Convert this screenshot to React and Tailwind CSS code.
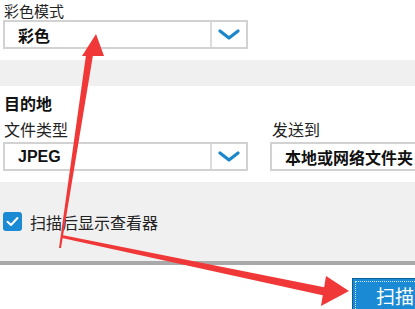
import React from "react";

const font = { fontFamily: '"Noto Sans CJK SC", "Noto Sans", sans-serif' };

function Chevron() {
  return (
    <svg width="22" height="12" viewBox="0 0 22 12">
      <path d="M2 2 L11 9 L20 2" fill="none" stroke="#1b86c9" strokeWidth="3.2" strokeLinecap="round" strokeLinejoin="round" />
    </svg>
  );
}

function Select({ value, arrow = true, className = "" }) {
  return (
    <div className={"flex h-[29px] border-2 border-[#d2d2d2] bg-white " + className}>
      <div className="flex flex-1 items-center pl-[13px] text-[16px] font-semibold text-[#111] leading-none">{value}</div>
      {arrow && (
        <div className="flex w-[36px] items-center justify-center border-l-2 border-[#dcdcdc]">
          <Chevron />
        </div>
      )}
    </div>
  );
}

export default function App() {
  return (
    <div className="relative h-[309px] w-[415px] overflow-hidden bg-white" style={font}>
      <div className="flex h-[60px] flex-col px-[3px] pt-[2px]">
        <div className="h-[18px] pl-[1px] text-[15px] leading-[17px] text-[#222]">彩色模式</div>
        <Select value="彩色" className="w-[245px]" />
      </div>
      <div className="h-[26px] bg-[#f0f0f0]" />
      <div className="flex h-[96px] gap-[22px] px-[3px] pt-[7px]">
        <div className="flex w-[245px] flex-col">
          <div className="h-[27px] pl-[1px] text-[16px] font-bold leading-[20px] text-[#111]">目的地</div>
          <div className="h-[22px] pl-[1px] text-[16px] leading-[19px] text-[#222]">文件类型</div>
          <Select value={<span style={{ fontFamily: '"Liberation Sans", Arial, sans-serif' }} className="font-bold">JPEG</span>} className="w-[245px]" />
        </div>
        <div className="flex flex-1 flex-col pt-[27px]">
          <div className="h-[22px] pl-[2px] text-[16px] leading-[19px] text-[#222]">发送到</div>
          <Select value="本地或网络文件夹" arrow={false} className="w-[160px]" />
        </div>
      </div>
      <div className="flex h-[79px] items-center gap-[8px] bg-[#f0f0f0] px-[3px]">
        <div className="flex h-[19px] w-[19px] items-center justify-center rounded-[3px] bg-[#1a8ad4]">
          <svg width="13" height="11" viewBox="0 0 13 11">
            <path d="M1.5 5.8 L5 9 L11.5 2" fill="none" stroke="white" strokeWidth="2" strokeLinecap="round" strokeLinejoin="round" />
          </svg>
        </div>
        <div className="text-[16px] leading-[20px] text-[#222]">扫描后显示查看器</div>
      </div>
      <div className="h-[4px] bg-[#a9a9a9]" />
      <div className="flex justify-end pt-[13px]">
        <div className="ml-auto h-[40px] w-[70px] translate-x-[7px] border border-[#0d5f97] bg-[#1a8ad4] p-[2px]">
          <div className="flex h-full items-start border border-dotted border-[#cfe6f6] pl-[20px] pt-[3px] text-[19px] leading-[22px] text-white">扫描</div>
        </div>
      </div>

      <svg className="pointer-events-none absolute left-0 top-0" width="415" height="309" viewBox="0 0 415 309">
        <polygon points="59,248 61,248 93,55 86,55" fill="#f03838" />
        <polygon points="96,34 82,56 104,56" fill="#f03838" />
        <polygon points="62,235 62,238 326,296 328,288" fill="#f03838" />
        <polygon points="349,291 326,276 321,306" fill="#f03838" />
      </svg>
    </div>
  );
}
